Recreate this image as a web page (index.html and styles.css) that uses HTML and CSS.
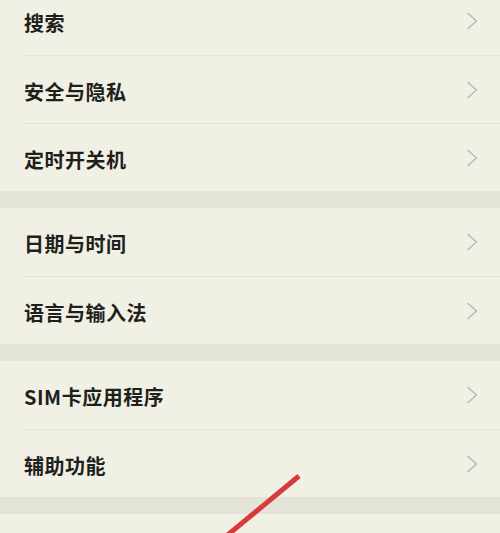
FILE: index.html
```html
<!DOCTYPE html>
<html lang="zh-CN">
<head>
<meta charset="utf-8">
<title>设置</title>
<link rel="stylesheet" href="styles.css">
</head>
<body>
<div class="page">
  <div class="group first">
    <div class="row"><span class="label">搜索</span><svg class="chev" viewBox="0 0 12 18"><polyline points="1.5,1 10.5,9 1.5,17"/></svg></div>
    <div class="row"><span class="label">安全与隐私</span><svg class="chev" viewBox="0 0 12 18"><polyline points="1.5,1 10.5,9 1.5,17"/></svg></div>
    <div class="row"><span class="label">定时开关机</span><svg class="chev" viewBox="0 0 12 18"><polyline points="1.5,1 10.5,9 1.5,17"/></svg></div>
  </div>
  <div class="band"></div>
  <div class="group">
    <div class="row"><span class="label">日期与时间</span><svg class="chev" viewBox="0 0 12 18"><polyline points="1.5,1 10.5,9 1.5,17"/></svg></div>
    <div class="row"><span class="label">语言与输入法</span><svg class="chev" viewBox="0 0 12 18"><polyline points="1.5,1 10.5,9 1.5,17"/></svg></div>
  </div>
  <div class="band"></div>
  <div class="group">
    <div class="row"><span class="label">SIM卡应用程序</span><svg class="chev" viewBox="0 0 12 18"><polyline points="1.5,1 10.5,9 1.5,17"/></svg></div>
    <div class="row"><span class="label">辅助功能</span><svg class="chev" viewBox="0 0 12 18"><polyline points="1.5,1 10.5,9 1.5,17"/></svg></div>
  </div>
  <div class="band"></div>
  <div class="group">
    <div class="row"></div>
  </div>
  <svg class="mark" viewBox="0 0 500 533" width="500" height="533"><line x1="299" y1="476" x2="224" y2="538"/></svg>
</div>
</body>
</html>
```

FILE: styles.css
```css
html, body {
  margin: 0;
  padding: 0;
  background: #f0f0e5;
}
body {
  width: 500px;
  height: 533px;
  overflow: hidden;
  font-family: "Noto Sans CJK SC", "Noto Sans", sans-serif;
}
.page {
  position: relative;
  width: 500px;
  height: 533px;
  overflow: hidden;
}
.group {
  background: #f0f0e5;
}
.group.first {
  margin-top: -13px;
}
.row {
  box-sizing: border-box;
  height: 68px;
  margin-left: 22px;
  padding: 0 22px 0 2px;
  display: flex;
  align-items: center;
  justify-content: space-between;
  border-top: 1px solid #e5e4d9;
}
.row:first-child {
  border-top: none;
}
.label {
  font-size: 20px;
  font-weight: 700;
  letter-spacing: 0.5px;
  color: #1f1f1c;
  padding-top: 3px;
}
.chev {
  width: 12px;
  height: 18px;
  fill: none;
  stroke: #b9b9b2;
  stroke-width: 1.4;
}
.band {
  height: 17px;
  background: #e4e3d8;
}
.mark {
  position: absolute;
  left: 0;
  top: 0;
  pointer-events: none;
}
.mark line {
  stroke: #d8393a;
  stroke-width: 5;
  stroke-linecap: butt;
}
```
